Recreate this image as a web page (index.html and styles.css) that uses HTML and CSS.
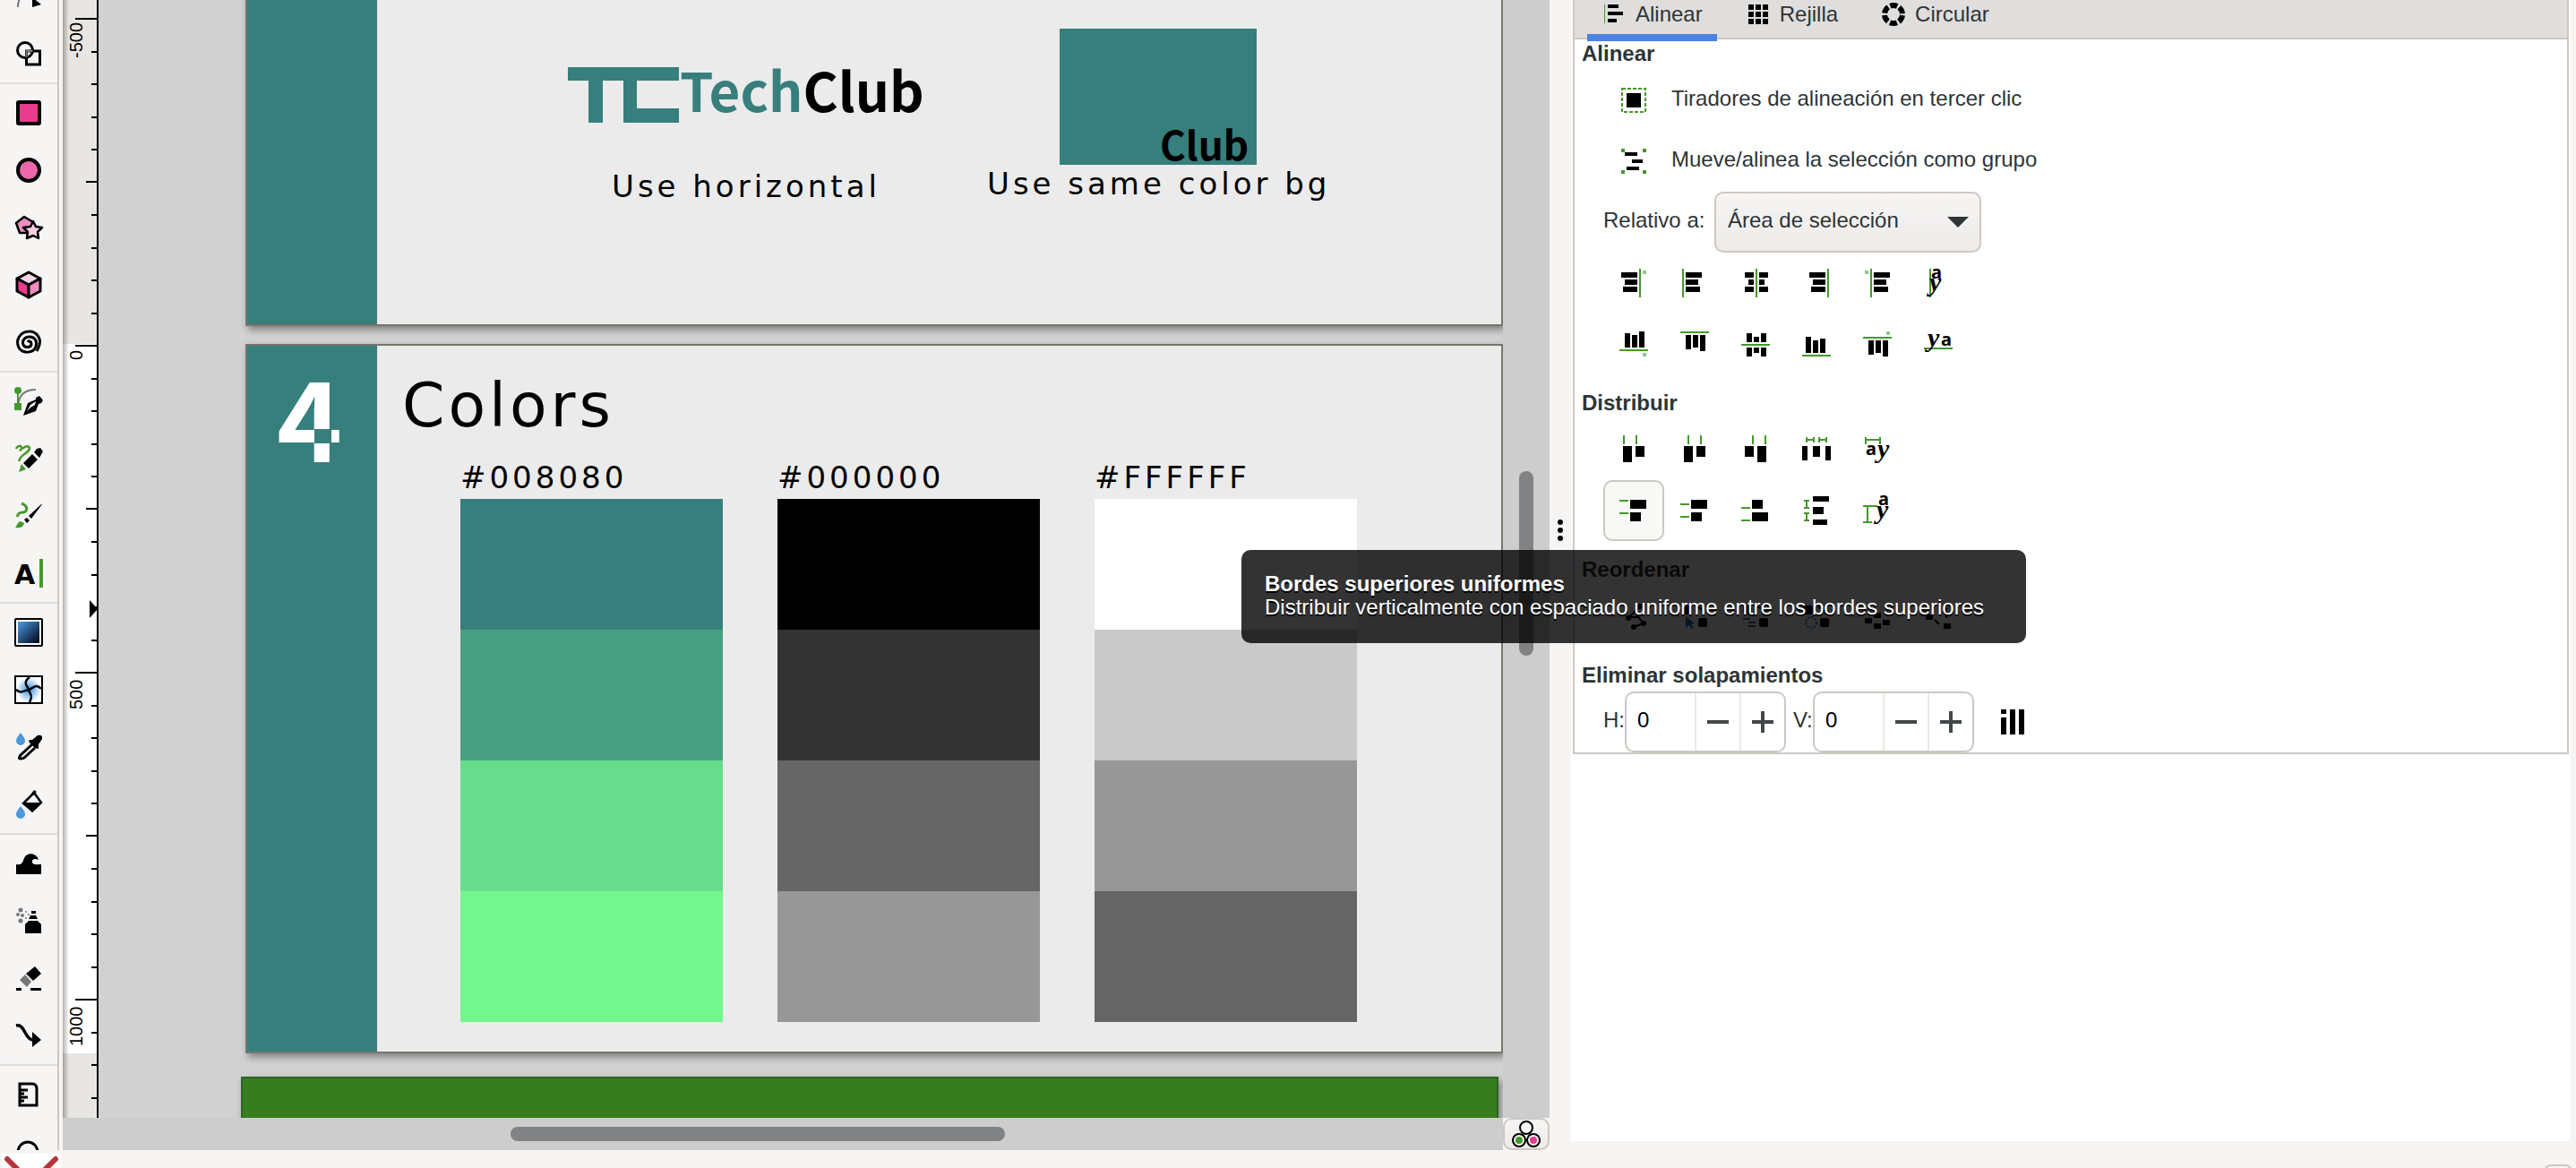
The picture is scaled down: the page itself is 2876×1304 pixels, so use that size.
FILE: index.html
```html
<!DOCTYPE html>
<html lang="es">
<head>
    <meta charset="UTF-8" />
    <title>Inkscape | TechClub</title>
    <meta name="viewport" content="width=device-width, initial-scale=1.0" />
    <link rel="stylesheet" href="styles.css">
</head>
<body>
    <div class="workspace">

        <!-- Toolbox -->
        <nav class="toolbox" aria-label="Herramientas">
            <button class="tool" aria-label="Nodos"><svg viewBox="0 0 32 32"><path d="M4 28Q4 12 20 10" fill="none" stroke="#777" stroke-width="2"/><path d="M20 17l10 8-10 3z"/></svg></button>
            <button class="tool" aria-label="Constructor de formas"><svg viewBox="0 0 32 32"><g fill="none" stroke="#000" stroke-width="3"><circle cx="12" cy="12" r="8.500"/><path d="M13.500 13h15v15h-15z"/></g><path d="M13.500 20V13h7" fill="none" stroke="#777" stroke-width="2"/></svg></button>
            <hr>
            <button class="tool" aria-label="Rectángulo"><svg viewBox="0 0 32 32"><rect x="4" y="4" width="24" height="24" rx="1" fill="#eb3b8f" stroke="#000" stroke-width="4"/></svg></button>
            <button class="tool" aria-label="Elipse"><svg viewBox="0 0 32 32"><circle cx="16" cy="16" r="12" fill="#ec66ab" stroke="#000" stroke-width="4"/></svg></button>
            <button class="tool" aria-label="Estrella"><svg viewBox="0 0 32 32" stroke="#000" stroke-width="2.500" stroke-linejoin="round"><path d="M11 4l10 6-2 12-13 0L2 11z" fill="#f08dc0"/><path d="M21 9l3 6 7 1-5 5 1 7-6-3-7 3 1-7-5-5 8-1z" fill="#f8cfe4"/></svg></button>
            <button class="tool" aria-label="Caja 3D"><svg viewBox="0 0 32 32" stroke="#000" stroke-width="3" stroke-linejoin="round"><path d="M16 2l13 7-13 7L3 9z" fill="#f8d3e6"/><path d="M3 9l13 7v14L3 23z" fill="#eb3b8f"/><path d="M29 9l-13 7v14l13-7z" fill="#f08dc0"/></svg></button>
            <button class="tool" aria-label="Espiral"><svg viewBox="0 0 32 32"><path d="M15 16c1-2 4-1 4 2 0 4-7 5-9 1-2-5 2-9 7-9 6 0 9 5 7 11-3 8-15 8-19 1C1 14 6 4 17 4c8 0 13 8 11 15-1 4-2 5-3 7" fill="none" stroke="#000" stroke-width="3"/></svg></button>
            <hr>
            <button class="tool" aria-label="Pluma"><svg viewBox="0 0 32 32"><path d="M4 22Q5 3 24 3" fill="none" stroke="#777" stroke-width="2"/><g fill="#45982c"><circle cx="4" cy="4" r="4"/><rect x="3" y="4" width="2" height="16"/><rect y="18" width="8" height="8"/></g><path d="M10 32l5-14 9-4v-2l4-2 4 5-2 3-3 1-3 8zM14 27l4-4 5-3 1-4-6 4z" fill-rule="evenodd"/></svg></button>
            <button class="tool" aria-label="Lápiz"><svg viewBox="0 0 32 32"><path d="M2 5c2-4 6-4 6-1S4 8 10 4s9 0 5 4-8 4-10 11" fill="none" stroke="#45982c" stroke-width="2.500"/><path d="M5 31l3-9 5 6z" fill="#45982c"/><path d="M10 21L20 11l6 6-10 10zM22 9l3-4 4-1 3 4-4 7z"/></svg></button>
            <button class="tool" aria-label="Caligrafía"><svg viewBox="0 0 32 32"><path d="M8 2c8 3 7 10 1 10-4 0-5 2-6 5" fill="none" stroke="#45982c" stroke-width="3"/><path d="M1 29c2-2 2-6 6-7l4 2c-1 5-6 6-10 5z" fill="#45982c"/><path d="M11 20l3-2 3 3-3 3zM16 16L30 3h1l-12 16z"/></svg></button>
            <button class="tool" aria-label="Texto"><svg viewBox="0 0 32 32"><text x="0" y="28" class="icon-letter">A</text><rect x="28" width="4" height="32" fill="#45982c"/></svg></button>
            <hr>
            <button class="tool" aria-label="Degradado"><svg viewBox="0 0 32 32"><defs><linearGradient id="blues" x1="0" y1="0" x2="1" y2="1"><stop offset="0" stop-color="#4a9fe8"/><stop offset="1" stop-color="#001"/></linearGradient></defs><rect x="1" y="1" width="30" height="30" rx="1" fill="#fff" stroke="#000" stroke-width="2"/><rect x="4" y="4" width="24" height="24" fill="url(#blues)"/></svg></button>
            <button class="tool" aria-label="Malla"><svg viewBox="0 0 32 32"><defs><radialGradient id="glow"><stop offset="0" stop-color="#2f8fe0"/><stop offset="1" stop-color="#fff"/></radialGradient></defs><rect x="1" y="1" width="30" height="30" fill="#fff" stroke="#000" stroke-width="2"/><circle cx="16" cy="16" r="14" fill="url(#glow)"/><path d="M17 2c-9 7-1 11-1 14s6 6 1 14M2 16c5 5 9 1 14 0s8-8 14-1" fill="none" stroke="#000" stroke-width="2.500"/></svg></button>
            <button class="tool" aria-label="Cuentagotas"><svg viewBox="0 0 32 32"><path d="M7 0c3 4 5 6 5 9a5 5 0 0 1-10 0c0-3 2-5 5-9z" fill="#4a98dd"/><path d="M20 13L7 25q-3 4 0 4t4-1l12-11" fill="none" stroke="#000" stroke-width="3"/><path d="M17 8l3 0 6-5q6-1 5 4l-4 6v5l-4-1-7-7z"/></svg></button>
            <button class="tool" aria-label="Relleno"><svg viewBox="0 0 32 32"><path d="M7 18c3 4 5 6 5 9a5 5 0 0 1-10 0c0-3 2-5 5-9z" fill="#4a98dd"/><path d="M10 15L22 3l8 11-10 9z" fill="none" stroke="#000" stroke-width="2.500"/><path d="M9 14h22L20 25zM22 0l3 2-4 4-2-2z"/></svg></button>
            <hr>
            <button class="tool" aria-label="Retocar"><svg viewBox="0 0 32 32"><path d="M2 28V17c7 1 7-2 9-7 3-7 14-6 16 2-4-2-8-1-7 3 1 3 6 2 10 2v11z"/></svg></button>
            <button class="tool" aria-label="Aerosol"><svg viewBox="0 0 32 32"><path d="M12 30V20l4-4h10l4 4v10zM16 14l2-4h6l2 4zM19 5h5v3h-5z"/><g fill="#777"><circle cx="7" cy="4" r="2.500"/><circle cx="4" cy="9" r="2"/><circle cx="7" cy="16" r="2.500"/><circle cx="9" cy="10" r="2"/><circle cx="13" cy="6" r="1"/><circle cx="13" cy="13" r="1"/><circle cx="16" cy="9" r="1"/></g></svg></button>
            <button class="tool" aria-label="Borrador"><svg viewBox="0 0 32 32"><path d="M13 11l10-8 7 8-9 8z"/><path d="M6 18l6-6 7 8-5 6z" fill="#777"/><path d="M2 27h6v3H2zM18 27h12v3H18z"/></svg></button>
            <button class="tool" aria-label="Conector"><svg viewBox="0 0 32 32"><path d="M2 5c10-2 9 14 18 16" fill="none" stroke="#000" stroke-width="3.500"/><path d="M20 12l10 9-10 8z"/></svg></button>
            <hr>
            <button class="tool" aria-label="Medir"><svg viewBox="0 0 32 32"><path d="M6 4h14q5 0 5 6v18H6zM6 11h9M6 15h5M6 19h9M6 23h5" fill="none" stroke="#000" stroke-width="3"/></svg></button>
            <button class="tool" aria-label="Zoom"><svg viewBox="0 0 32 32"><circle cx="15" cy="16" r="11" fill="none" stroke="#000" stroke-width="3"/></svg></button>
        </nav>

        <!-- Vertical ruler -->
        <div class="ruler">
            <svg width="40" height="100%">
                <defs>
                    <pattern id="ticks" y="10" width="40" height="365" patternUnits="userSpaceOnUse">
                        <path d="M14 11h26M32 48h8M32 84h8M32 121h8M32 157h8M26 193h14M32 230h8M32 267h8M32 303h8M32 340h8" stroke="#000" stroke-width="2"/>
                    </pattern>
                    <linearGradient id="edge"><stop offset="0" stop-color="#000" stop-opacity=".3"/><stop offset="1" stop-color="#000" stop-opacity="0"/></linearGradient>
                </defs>
                <rect class="ruler-page" y="384" width="40" height="792"/>
                <rect width="7" height="100%" fill="url(#edge)"/>
                <rect width="40" height="100%" fill="url(#ticks)"/>
                <rect x="38" width="2" height="100%"/>
                <path d="M30 670l9 10-9 10z"/>
                <g class="ruler-labels">
                    <text transform="translate(22 65) rotate(-90)">-500</text>
                    <text transform="translate(22 402) rotate(-90)">0</text>
                    <text transform="translate(22 792) rotate(-90)">500</text>
                    <text transform="translate(22 1168) rotate(-90)">1000</text>
                </g>
            </svg>
        </div>

        <!-- Drawing canvas -->
        <main class="canvas">
            <section class="artboard artboard-logo">
                <div class="artboard-band"></div>
                <svg class="logo-mark" viewBox="0 0 124 62"><path d="M0 0h124v15H77v31h47v16H62V15H39v47H23V15H0z"/></svg>
                <p class="wordmark"><span>Tech</span>Club</p>
                <p class="caption caption-horizontal">Use horizontal</p>
                <div class="logo-tile"></div>
                <p class="wordmark wordmark-small">Club</p>
                <p class="caption caption-color">Use same color bg</p>
            </section>
            <section class="artboard artboard-colors">
                <div class="artboard-band"></div>
                <p class="page-number">4</p>
                <div class="number-cut"></div>
                <h1>Colors</h1>
                <div class="palettes">
                    <div class="palette">
                        <p class="caption">#008080</p>
                        <div class="swatch teal-1"></div>
                        <div class="swatch teal-2"></div>
                        <div class="swatch teal-3"></div>
                        <div class="swatch teal-4"></div>
                    </div>
                    <div class="palette">
                        <p class="caption">#000000</p>
                        <div class="swatch black-1"></div>
                        <div class="swatch black-2"></div>
                        <div class="swatch black-3"></div>
                        <div class="swatch black-4"></div>
                    </div>
                    <div class="palette">
                        <p class="caption">#FFFFFF</p>
                        <div class="swatch white-1"></div>
                        <div class="swatch white-2"></div>
                        <div class="swatch white-3"></div>
                        <div class="swatch white-4"></div>
                    </div>
                </div>
            </section>
            <section class="artboard artboard-next"></section>
        </main>

        <div class="scroll-v"><div class="thumb"></div></div>
        <div class="gutter"><i></i><i></i><i></i></div>

        <!-- Align and distribute dialog -->
        <aside class="dock">
            <div class="dialog">
                <div class="tabs" role="tablist">
                    <button class="tab active" role="tab" aria-selected="true"><svg viewBox="0 0 32 32"><path d="M9 5h12v4H9zM9 13h17v4H9zM9 21h10v4H9z"/><path class="guide" d="M5 5h1v21H5z"/></svg>Alinear</button>
                    <button class="tab" role="tab"><svg viewBox="0 0 32 32"><path d="M5 5h6v6H5zM13 5h6v6h-6zM21 5h6v6h-6zM5 13h6v6H5zM13 13h6v6h-6zM21 13h6v6h-6zM5 21h6v6H5zM13 21h6v6h-6zM21 21h6v6h-6z"/></svg>Rejilla</button>
                    <button class="tab" role="tab"><svg viewBox="0 0 32 32"><circle cx="16" cy="16" r="10" fill="none" stroke="#000" stroke-width="6" stroke-dasharray="7.970 2.500" stroke-dashoffset="-1.250"/></svg>Circular</button>
                </div>

                <h2>Alinear</h2>
                <div class="row">
                    <button class="icon-btn" id="handles"><svg viewBox="0 0 32 32"><path d="M8 8h16v16H8z"/><path d="M3 3h26v26H3z" fill="none" stroke="#45982c" stroke-width="2" stroke-dasharray="4 2"/></svg></button>
                    <label class="row-label" for="handles">Tiradores de alineación en tercer clic</label>
                </div>
                <div class="row">
                    <button class="icon-btn" id="group"><svg viewBox="0 0 32 32"><path d="M6 6h14v4H6zM14 14h12v4H14zM8 22h14v4H8z"/><path class="guide" d="M2 2h4v4H2zM26 2h4v4h-4zM2 26h4v4H2zM26 26h4v4h-4z"/></svg></button>
                    <label class="row-label" for="group">Mueve/alinea la selección como grupo</label>
                </div>
                <div class="row">
                    <label class="select-label" for="relative">Relativo a:</label>
                    <span class="select-box">
                        <select id="relative">
                            <option>Área de selección</option>
                            <option>Página</option>
                            <option>Dibujo</option>
                        </select>
                    </span>
                </div>
                <div class="row">
                    <button class="icon-btn" aria-label="Bordes derechos al borde izquierdo del ancla"><svg viewBox="0 0 32 32"><path d="M2 4h18v6H2zM6 12h14v6H6zM4 20h16v6H4z"/><path class="guide" d="M22 0h2v32h-2z"/><path class="anchor" d="M26 2h4v4h-4z"/></svg></button>
                    <button class="icon-btn" aria-label="Alinear bordes izquierdos"><svg viewBox="0 0 32 32"><path d="M6 4h18v6H6zM6 12h14v6H6zM6 20h16v6H6z"/><path class="guide" d="M2 0h2v32H2z"/></svg></button>
                    <button class="icon-btn" aria-label="Centrar en el eje vertical"><svg viewBox="0 0 32 32"><path d="M4 4h10v6H4zM20 4h10v6H20zM8 12h6v6H8zM20 12h6v6h-6zM4 20h10v6H4zM20 20h10v6H20z"/><path class="guide" d="M16 0h2v32h-2z"/></svg></button>
                    <button class="icon-btn" aria-label="Alinear bordes derechos"><svg viewBox="0 0 32 32"><path d="M8 4h18v6H8zM12 12h14v6H12zM10 20h16v6H10z"/><path class="guide" d="M28 0h2v32h-2z"/></svg></button>
                    <button class="icon-btn" aria-label="Bordes izquierdos al borde derecho del ancla"><svg viewBox="0 0 32 32"><path d="M12 4h18v6H12zM12 12h14v6H12zM12 20h16v6H12z"/><path class="guide" d="M8 0h2v32H8z"/><path class="anchor" d="M2 2h4v4H2z"/></svg></button>
                    <button class="icon-btn" aria-label="Alinear anclajes de texto en horizontal"><svg viewBox="0 0 32 32"><path class="guide" d="M6 0h2v32H6z"/><text class="glyph-a" x="8" y="11">a</text><text class="glyph-y" x="6" y="25">y</text></svg></button>
                </div>
                <div class="row">
                    <button class="icon-btn" aria-label="Bordes inferiores al borde superior del ancla"><svg viewBox="0 0 32 32"><path d="M6 4h6v16H6zM14 6h6v14h-6zM22 2h6v18h-6z"/><path class="guide" d="M0 22h32v2H0z"/><path class="anchor" d="M26 26h4v4h-4z"/></svg></button>
                    <button class="icon-btn" aria-label="Alinear bordes superiores"><svg viewBox="0 0 32 32"><path d="M6 6h6v16H6zM14 6h6v14h-6zM22 6h6v18h-6z"/><path class="guide" d="M0 2h32v2H0z"/></svg></button>
                    <button class="icon-btn" aria-label="Centrar en el eje horizontal"><svg viewBox="0 0 32 32"><path d="M6 4h6v10H6zM6 20h6v10H6zM14 8h6v6h-6zM14 20h6v6h-6zM22 4h6v10h-6zM22 20h6v10h-6z"/><path class="guide" d="M0 16h32v2H0z"/></svg></button>
                    <button class="icon-btn" aria-label="Alinear bordes inferiores"><svg viewBox="0 0 32 32"><path d="M4 8h6v18H4zM12 12h6v14h-6zM20 10h6v16h-6z"/><path class="guide" d="M0 28h32v2H0z"/></svg></button>
                    <button class="icon-btn" aria-label="Bordes superiores al borde inferior del ancla"><svg viewBox="0 0 32 32"><path d="M6 12h6v16H6zM14 12h6v14h-6zM22 12h6v18h-6z"/><path class="guide" d="M0 8h32v2H0z"/><path class="anchor" d="M26 2h4v4h-4z"/></svg></button>
                    <button class="icon-btn" aria-label="Alinear líneas base de texto"><svg viewBox="0 0 32 32"><path class="guide" d="M0 20h32v2H0z"/><text class="glyph-y" x="4" y="19">y</text><text class="glyph-a" x="19" y="18">a</text></svg></button>
                </div>

                <h2>Distribuir</h2>
                <div class="row">
                    <button class="icon-btn" aria-label="Bordes izquierdos uniformes"><svg viewBox="0 0 32 32"><path d="M4 12h10v18H4zM18 12h10v12H18z"/><path class="guide" d="M4 0h2v10H4zM18 0h2v10h-2z"/></svg></button>
                    <button class="icon-btn" aria-label="Centros horizontales uniformes"><svg viewBox="0 0 32 32"><path d="M4 12h10v18H4zM18 12h10v12H18z"/><path class="guide" d="M8 0h2v10H8zM22 0h2v10h-2z"/></svg></button>
                    <button class="icon-btn" aria-label="Bordes derechos uniformes"><svg viewBox="0 0 32 32"><path d="M4 12h10v12H4zM18 12h10v18H18z"/><path class="guide" d="M12 0h2v10h-2zM26 0h2v10h-2z"/></svg></button>
                    <button class="icon-btn" aria-label="Espacios horizontales uniformes"><svg viewBox="0 0 32 32"><path d="M0 12h6v16H0zM12 12h8v12h-8zM26 12h6v16h-6z"/><path class="guide" d="M4 2h2v2h6V2h2v6h-2V6H6v2H4zM18 2h2v2h6V2h2v6h-2V6h-6v2h-2z"/></svg></button>
                    <button class="icon-btn" aria-label="Anclajes de texto uniformes en horizontal"><svg viewBox="0 0 32 32"><path class="guide" d="M2 2h2v2h14V2h2v8h-2V6H4v4H2z"/><text class="glyph-a" x="3" y="22">a</text><text class="glyph-y" x="16" y="25">y</text></svg></button>
                </div>
                <div class="row">
                    <button class="icon-btn hovered" aria-label="Bordes superiores uniformes" aria-describedby="tip"><svg viewBox="0 0 32 32"><path d="M12 4h18v10H12zM12 18h12v10H12z"/><path class="guide" d="M0 4h10v2H0zM0 18h10v2H0z"/></svg></button>
                    <button class="icon-btn" aria-label="Centros verticales uniformes"><svg viewBox="0 0 32 32"><path d="M12 4h18v10H12zM12 18h12v10H12z"/><path class="guide" d="M0 8h10v2H0zM0 22h10v2H0z"/></svg></button>
                    <button class="icon-btn" aria-label="Bordes inferiores uniformes"><svg viewBox="0 0 32 32"><path d="M12 4h12v10H12zM12 18h18v10H12z"/><path class="guide" d="M0 12h10v2H0zM0 26h10v2H0z"/></svg></button>
                    <button class="icon-btn" aria-label="Espacios verticales uniformes"><svg viewBox="0 0 32 32"><path d="M12 0h18v6H12zM12 12h12v8H12zM12 26h16v6H12z"/><path class="guide" d="M2 4h6v2H6v6h2v2H2v-2h2V6H2zM2 18h6v2H6v6h2v2H2v-2h2v-6H2z"/></svg></button>
                    <button class="icon-btn" aria-label="Líneas base de texto uniformes"><svg viewBox="0 0 32 32"><path class="guide" d="M0 10h16v2H6v16h4v2H0v-2h4V12H0z"/><text class="glyph-a" x="17" y="10">a</text><text class="glyph-y" x="15" y="25">y</text></svg></button>
                </div>

                <h2>Reordenar</h2>
                <div class="row">
                    <button class="icon-btn" aria-label="Red de conectores"><svg viewBox="0 0 32 32"><path d="M23 5L10 18M10 17h11l6 7-11 4" fill="none" stroke="#000" stroke-width="2"/><circle cx="23" cy="5" r="3"/><circle cx="10" cy="18" r="3"/><circle cx="21" cy="16" r="2"/><circle cx="27" cy="24" r="3"/><circle cx="16" cy="28" r="3"/></svg></button>
                    <button class="icon-btn" aria-label="Intercambiar por selección"><svg viewBox="0 0 32 32"><rect x="2" y="4" width="10" height="10" rx="2"/><rect x="20" y="18" width="10" height="10" rx="2"/><path d="M18 6q7 0 8 8" fill="none" stroke="#000" stroke-width="2"/><path class="swap" d="M6 16l10 8-4 1 3 4-2 1-3-4-4 3z"/></svg></button>
                    <button class="icon-btn" aria-label="Intercambiar por orden"><svg viewBox="0 0 32 32"><rect x="2" y="4" width="10" height="10" rx="2"/><rect x="20" y="18" width="10" height="10" rx="2"/><path d="M18 6q7 0 8 8" fill="none" stroke="#000" stroke-width="2"/><path class="swap" d="M8 14h8v2H8zM2 18h8v2H2zM8 22h8v2H8zM8 26h8v2H8z"/></svg></button>
                    <button class="icon-btn" aria-label="Intercambiar en sentido horario"><svg viewBox="0 0 32 32"><rect x="2" y="4" width="10" height="10" rx="2"/><rect x="20" y="18" width="10" height="10" rx="2"/><path d="M18 6q7 0 8 8" fill="none" stroke="#000" stroke-width="2"/><circle cx="10" cy="23" r="6" fill="none" stroke="#2373b9" stroke-width="2" stroke-dasharray="2 2"/></svg></button>
                    <button class="icon-btn" aria-label="Aleatorizar"><svg viewBox="0 0 32 32"><path d="M2 18h8v6H2zM12 24h8v6h-8zM12 12h8v6h-8zM22 20h8v6h-8z"/></svg></button>
                    <button class="icon-btn" aria-label="Dispersar"><svg viewBox="0 0 32 32"><path d="M2 14h8v6H2zM22 24h8v6h-8z"/><path d="M12 20l5 5M25 18V7" stroke="#000" stroke-width="2"/></svg></button>
                </div>

                <h2>Eliminar solapamientos</h2>
                <div class="row spin-row">
                    <label for="gap-h">H:</label>
                    <div class="spin">
                        <input id="gap-h" type="text" value="0">
                        <button aria-label="Menos"><svg viewBox="0 0 24 24"><path d="M0 10h24v4H0z"/></svg></button>
                        <button aria-label="Más"><svg viewBox="0 0 24 24"><path d="M0 10h10V0h4v10h10v4H14v10h-4V14H0z"/></svg></button>
                    </div>
                    <label class="label-v" for="gap-v">V:</label>
                    <div class="spin">
                        <input id="gap-v" type="text" value="0">
                        <button aria-label="Menos"><svg viewBox="0 0 24 24"><path d="M0 10h24v4H0z"/></svg></button>
                        <button aria-label="Más"><svg viewBox="0 0 24 24"><path d="M0 10h10V0h4v10h10v4H14v10h-4V14H0z"/></svg></button>
                    </div>
                    <button class="icon-btn remove-btn" aria-label="Eliminar solapamientos"><svg viewBox="0 0 32 32"><path d="M4 2h6v5H4zM4 11h6v19H4zM14 2h6v28h-6zM24 2h6v28h-6z"/></svg></button>
                </div>
            </div>
        </aside>

        <div class="scroll-h"><div class="thumb"></div></div>
        <button class="cms-btn" aria-label="Gestión de color"><svg viewBox="0 0 32 32"><g fill="#f6f5f4" stroke="#000" stroke-width="2"><circle cx="16" cy="9" r="7"/><circle cx="8" cy="23" r="7"/><circle cx="24" cy="23" r="7"/></g><circle cx="8" cy="23" r="4" fill="#45982c"/><circle cx="24" cy="23" r="4" fill="#eb3b8f"/></svg></button>
    </div>

    <footer class="statusbar">
        <svg class="no-fill" viewBox="0 0 66 16"><path d="M6 6l27 27L60 6" fill="none" stroke="#b5353c" stroke-width="6" stroke-linecap="round"/></svg>
        <button class="status-btn" aria-label="Rotación"></button>
    </footer>

    <div class="tooltip" id="tip" role="tooltip">
        <strong>Bordes superiores uniformes</strong>
        <span>Distribuir verticalmente con espaciado uniforme entre los bordes superiores</span>
    </div>
</body>
</html>
```
FILE: styles.css
```css
:root {
    --chrome: #f6f5f4;
    --border: #cdc7c2;
    --text: #2e3436;
    --guide: #45982c;
    --teal: #377f7d;
    --paper: #ebebeb;
    --desk: #d1d1d1;
    --track: #cdcdcd;
    --thumb: #808284;
}

* {
    margin: 0;
    padding: 0;
    box-sizing: border-box;
}

html, body {
    height: 100%;
}

body {
    display: flex;
    flex-direction: column;
    overflow: hidden;
    background: var(--chrome);
    color: var(--text);
    font: 24px/28px "Liberation Sans", Arial, sans-serif;
}

button, input, select {
    font: inherit;
    color: inherit;
    background: none;
    border: none;
}

svg {
    display: block;
}

/* Main grid: toolbox, ruler, canvas, scrollbar, gutter, dock */
.workspace {
    flex: 1;
    min-height: 0;
    display: grid;
    grid-template-columns: 70px 40px 1568fr 52px 24px 1122fr;
    grid-template-rows: minmax(0, 1fr) 36px;
}

.toolbox {
    grid-row: 1 / 3;
    width: 66px;
    overflow: hidden;
    display: flex;
    flex-direction: column;
    border-right: 2px solid var(--border);
}

/* The list is scrolled, so the first tool is cut by the window edge */
.toolbox .tool:first-child {
    margin-top: -36px;
}

.toolbox hr {
    flex: none;
    height: 2px;
    border: none;
    background: #dedddb;
}

.tool {
    flex: none;
    height: 64px;
    display: flex;
    align-items: center;
    justify-content: center;
}

.tool svg, .tab svg, .icon-btn svg {
    width: 32px;
    height: 32px;
    overflow: visible;
}

.icon-letter {
    font: bold 30px "DejaVu Sans", sans-serif;
}

/* Ruler */
.ruler {
    background: #e8e6e3;
    overflow: hidden;
}

.ruler-page {
    fill: #fff;
}

.ruler-labels {
    font-size: 20px;
    fill: #000;
}

/* Canvas */
.canvas {
    position: relative;
    overflow: hidden;
    background: var(--desk);
    color: #000;
}

.artboard {
    position: absolute;
    left: 164px;
    width: 1404px;
    background: var(--paper);
    border: 2px solid #77756c;
    box-shadow: 3px 4px 8px rgba(0, 0, 0, 0.4);
}

.artboard-logo {
    top: -426px;
    height: 790px;
}

.artboard-colors {
    top: 384px;
    height: 792px;
}

.artboard-next {
    left: 159px;
    top: 1202px;
    height: 790px;
    background: #367d1f;
    border-color: #2c6420;
}

.artboard-band {
    width: 145px;
    height: 100%;
    background: var(--teal);
}

.caption {
    font: 34px/40px "DejaVu Sans", Verdana, sans-serif;
    letter-spacing: 4px;
    white-space: nowrap;
}

.wordmark {
    position: absolute;
    left: 483px;
    top: 483px;
    font: bold 60px/80px "Noto Sans CJK JP", sans-serif;
}

.wordmark span {
    color: var(--teal);
}

.wordmark-small {
    left: 1019px;
    top: 564px;
    font-size: 44px;
    line-height: 40px;
}

.logo-mark {
    position: absolute;
    left: 358px;
    top: 499px;
    width: 124px;
    height: 62px;
    fill: var(--teal);
}

.logo-tile {
    position: absolute;
    left: 907px;
    top: 456px;
    width: 220px;
    height: 152px;
    background: var(--teal);
}

.caption-horizontal {
    position: absolute;
    left: 407px;
    top: 612px;
}

.caption-color {
    position: absolute;
    left: 826px;
    top: 609px;
}

.page-number {
    position: absolute;
    left: 33px;
    top: -4px;
    font: bold 124px/160px "Noto Sans CJK JP", sans-serif;
    color: #fff;
}

/* Square where the strokes of the number cross */
.number-cut {
    position: absolute;
    left: 75px;
    top: 93px;
    width: 19px;
    height: 16px;
    background: var(--teal);
}

.artboard h1 {
    position: absolute;
    left: 173px;
    top: 27px;
    font: 68px/80px "DejaVu Sans", Verdana, sans-serif;
    letter-spacing: 4px;
}

.palettes {
    position: absolute;
    left: 238px;
    top: 127px;
    display: grid;
    grid-template-columns: repeat(3, 293px);
    column-gap: 61px;
}

.palette .caption {
    margin-bottom: 4px;
}

.swatch {
    height: 146px;
}

.teal-1 { background: #377f7d; }
.teal-2 { background: #489f81; }
.teal-3 { background: #66dc8c; }
.teal-4 { background: #73f68e; }
.black-1 { background: #000; }
.black-2 { background: #333; }
.black-3 { background: #666; }
.black-4 { background: #979797; }
.white-1 { background: #fff; }
.white-2 { background: #c9c9c9; }
.white-3 { background: #979797; }
.white-4 { background: #656565; }

/* Scrollbars */
.scroll-v {
    background: var(--track);
    padding: 526px 18px 0;
}

.scroll-v .thumb {
    height: 206px;
}

.scroll-h {
    grid-column: 2 / 4;
    background: var(--track);
    padding: 10px 0 0 500px;
}

.scroll-h .thumb {
    width: 552px;
    height: 16px;
}

.thumb {
    border-radius: 8px;
    background: var(--thumb);
}

.cms-btn {
    display: flex;
    align-items: center;
    justify-content: center;
    border: 2px solid var(--border);
    border-radius: 10px;
    background: linear-gradient(#f6f5f4, #edebe9);
}

.cms-btn svg {
    width: 32px;
    height: 32px;
}

.gutter {
    grid-row: 1 / 3;
    grid-column: 5;
    display: flex;
    flex-direction: column;
    align-items: center;
    justify-content: center;
    gap: 3px;
    padding-bottom: 100px;
}

.gutter i {
    width: 6px;
    height: 6px;
    border-radius: 50%;
    background: #000;
}

/* Dock */
.dock {
    grid-row: 1 / 3;
    grid-column: 6;
    margin: 0 6px 10px 0;
    padding: 0 2px;
    background: #fff;
}

.dialog {
    border: 2px solid var(--border);
    border-top: none;
}

.tabs {
    display: flex;
    gap: 16px;
    height: 44px;
    padding: 0 14px;
    background: #dfdedc;
    border-bottom: 2px solid var(--border);
}

.tab {
    display: flex;
    align-items: flex-start;
    gap: 8px;
    height: 46px;
    padding: 0 16px 0 14px;
    line-height: 32px;
    border-bottom: 8px solid transparent;
}

.tab.active {
    border-color: #4a83e0;
}

.dialog h2 {
    margin: 16px 0 2px;
    padding-left: 8px;
    font-size: 24px;
    line-height: 32px;
}

.dialog .tabs + h2 {
    margin-top: 0;
}

.row {
    display: flex;
    align-items: center;
    height: 68px;
    padding-left: 32px;
}

.row-label {
    padding: 0 0 4px 8px;
}

.icon-btn {
    width: 68px;
    height: 68px;
    display: flex;
    align-items: center;
    justify-content: center;
    border: 2px solid transparent;
    border-radius: 10px;
}

.icon-btn.hovered {
    border-color: var(--border);
    background: #f8f8f7;
}

.guide {
    fill: var(--guide);
}

.anchor {
    fill: #8fcb89;
}

.swap {
    fill: #2373b9;
}

.glyph-a {
    font: bold 20px "Noto Sans", sans-serif;
}

.glyph-y {
    font: italic bold 30px "Liberation Serif", serif;
}

.select-label {
    width: 116px;
    padding-bottom: 4px;
}

.select-box {
    position: relative;
    margin-left: 8px;
}

.select-box select {
    width: 298px;
    height: 68px;
    padding: 0 60px 4px 13px;
    appearance: none;
    border: 2px solid var(--border);
    border-radius: 10px;
    background: linear-gradient(#f6f5f4, #edebe9);
}

.select-box::after {
    content: '';
    position: absolute;
    right: 14px;
    top: 28px;
    border: 12px solid transparent;
    border-top-color: var(--text);
    border-bottom: none;
    pointer-events: none;
}

/* Spin buttons */
.spin-row > label {
    width: 24px;
    padding-bottom: 4px;
}

.spin-row > .label-v {
    width: 22px;
    margin-left: 8px;
}

.spin {
    display: flex;
    width: 180px;
    height: 68px;
    border: 2px solid var(--border);
    border-radius: 10px;
}

.spin input {
    flex: 1;
    min-width: 0;
    padding: 0 0 4px 12px;
    color: #000;
}

.spin button {
    width: 50px;
    display: flex;
    align-items: center;
    justify-content: center;
    border-left: 2px solid #ebe9e7;
}

.spin svg {
    width: 24px;
    height: 24px;
    fill: #434749;
}

.remove-btn {
    margin-left: 8px;
}

/* Status bar */
.statusbar {
    height: 20px;
    overflow: hidden;
    display: flex;
    justify-content: space-between;
    padding: 4px 4px 0 2px;
}

.no-fill {
    width: 66px;
    height: 16px;
    background: #fff;
}

.status-btn {
    width: 32px;
    height: 32px;
    margin-top: 12px;
    border: 2px solid var(--border);
    border-radius: 8px;
}

/* Tooltip */
.tooltip {
    position: absolute;
    left: 1386px;
    top: 614px;
    min-width: 876px;
    display: flex;
    flex-direction: column;
    padding: 25px 26px 27px;
    border-radius: 10px;
    background: rgba(0, 0, 0, 0.8);
    color: #fff;
    line-height: 26px;
    text-shadow: 0 2px #000;
    white-space: nowrap;
}
```
